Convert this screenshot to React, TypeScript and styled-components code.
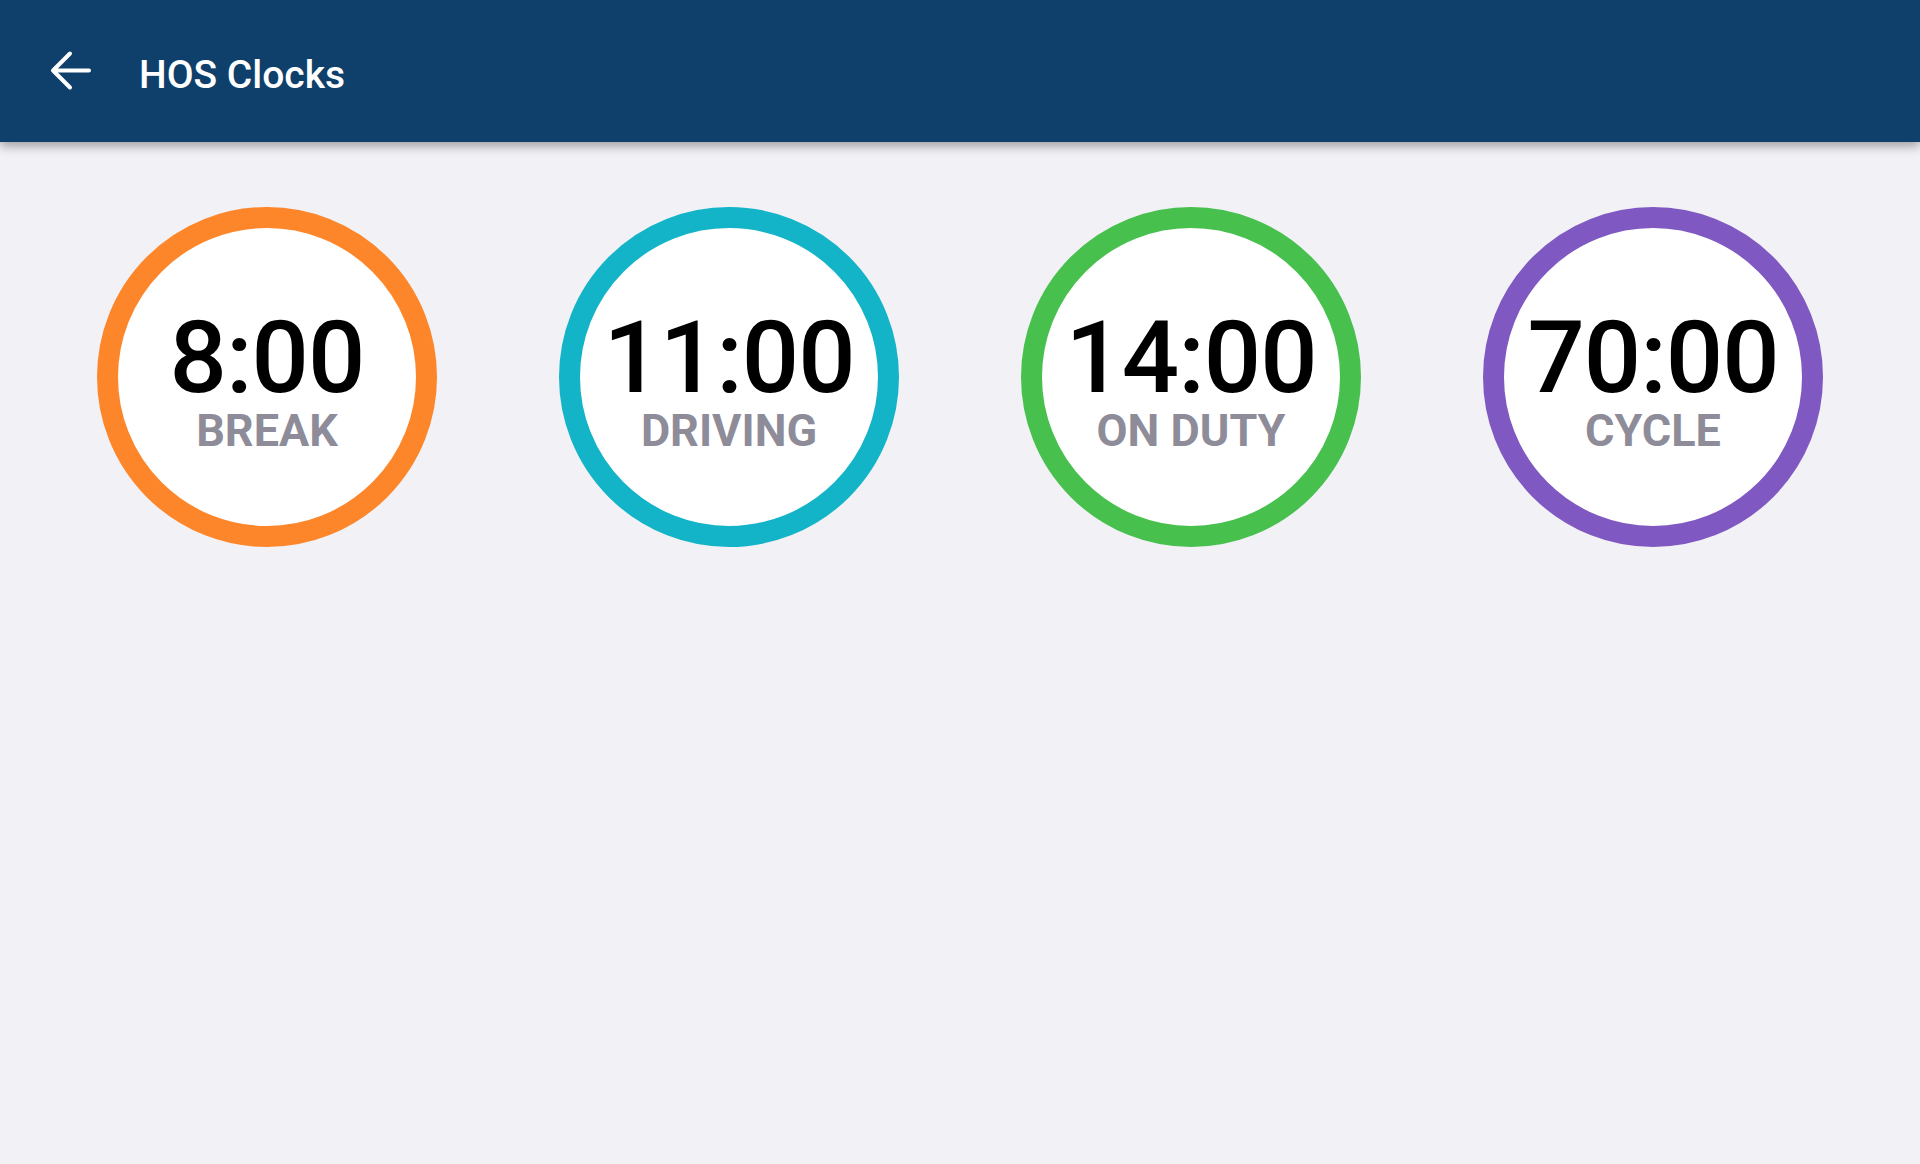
import React from "react";
import styled, { createGlobalStyle } from "styled-components";

const GlobalStyle = createGlobalStyle`
  html, body {
    margin: 0;
    padding: 0;
    background: #f1f1f6;
    font-family: Roboto, "Liberation Sans", sans-serif;
  }
  * {
    box-sizing: border-box;
  }
`;

type Clock = {
  time: string;
  label: string;
  color: string;
};

const clocks: Clock[] = [
  { time: "8:00", label: "BREAK", color: "#fd862b" },
  { time: "11:00", label: "DRIVING", color: "#13b3c8" },
  { time: "14:00", label: "ON DUTY", color: "#48c04e" },
  { time: "70:00", label: "CYCLE", color: "#7f58c2" },
];

export default function App() {
  return (
    <>
      <GlobalStyle />
      <Page>
        <TopBar>
          <BackButton aria-label="Back">
            <svg width="46" height="46" viewBox="0 0 46 46" fill="none">
              <path
                d="M22 6.5 L5 23.5 L22 40.5 M5 23.5 H41"
                stroke="#ffffff"
                strokeWidth="4"
                strokeLinecap="round"
                strokeLinejoin="round"
              />
            </svg>
          </BackButton>
          <Title>HOS Clocks</Title>
        </TopBar>

        <ClockRow>
          {clocks.map((c) => (
            <ClockRing key={c.label} $color={c.color}>
              <Time>{c.time}</Time>
              <Label>{c.label}</Label>
            </ClockRing>
          ))}
        </ClockRow>
      </Page>
    </>
  );
}

const Page = styled("div")`
  min-height: 1164px;
  background: #f1f1f6;
`;

const TopBar = styled("header")`
  position: relative;
  z-index: 1;
  height: 142px;
  display: flex;
  align-items: center;
  padding-left: 48px;
  background: #0f3f6b;
  box-shadow: 0 4px 10px rgba(0, 0, 0, 0.35);
`;

const BackButton = styled("button")`
  display: flex;
  align-items: center;
  justify-content: center;
  width: 46px;
  height: 46px;
  padding: 0;
  margin-top: -2px;
  border: none;
  background: transparent;
  cursor: pointer;
`;

const Title = styled("h1")`
  margin: 0 0 0 45px;
  color: #ffffff;
  font-size: 39px;
  font-weight: 500;
  line-height: 1;
  padding-top: 8px;
`;

const ClockRow = styled("main")`
  display: flex;
  justify-content: center;
  gap: 122px;
  padding-top: 65px;
`;

const ClockRing = styled("div")<{ $color: string }>`
  width: 340px;
  height: 340px;
  border-radius: 50%;
  border: 21px solid ${(p) => p.$color};
  background: #ffffff;
  display: flex;
  flex-direction: column;
  align-items: center;
  justify-content: center;
  padding-top: 6px;
`;

const Time = styled("div")`
  color: #000000;
  font-size: 101px;
  font-weight: 500;
  line-height: 1;
  letter-spacing: -1px;
`;

const Label = styled("div")`
  color: #8e8c99;
  font-size: 45px;
  font-weight: 700;
  line-height: 1.02;
`;
